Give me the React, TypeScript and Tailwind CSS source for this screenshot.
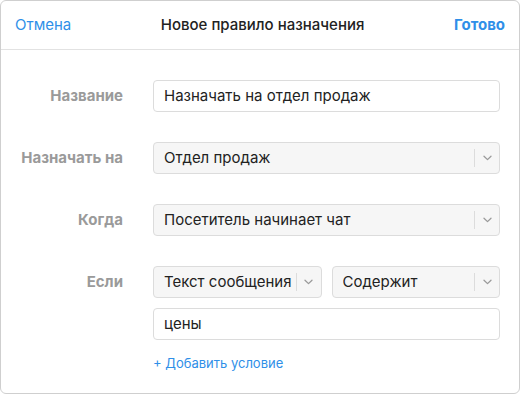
import React from "react";

const Chevron = () => (
  <svg width="9" height="6" viewBox="0 0 9 6" fill="none">
    <path d="M1 1.2 L4.5 4.6 L8 1.2" stroke="#9a9a9a" strokeWidth="1.3" strokeLinecap="round" strokeLinejoin="round" />
  </svg>
);

const Select = ({ value, className = "" }: { value: string; className?: string }) => (
  <div className={`flex h-[32px] items-center rounded-[4px] border border-[#dcdcdc] bg-[#f6f6f6] pl-[10px] ${className}`}>
    <span className="flex-1 truncate text-[15px] text-[#222]">{value}</span>
    <span className="h-[18px] w-px bg-[#dcdcdc]" />
    <span className="flex w-[24px] items-center justify-center">
      <Chevron />
    </span>
  </div>
);

const Input = ({ value }: { value: string }) => (
  <div className="flex h-[32px] items-center rounded-[4px] border border-[#dcdcdc] bg-white pl-[10px]">
    <span className="text-[15px] text-[#222]">{value}</span>
  </div>
);

const Label = ({ children }: { children: React.ReactNode }) => (
  <div className="flex h-[32px] w-[122px] shrink-0 items-center justify-end text-[15px] font-bold text-[#9a9a9a]">
    {children}
  </div>
);

export default function App() {
  return (
    <div
      className="h-[394px] w-[520px] bg-white"
      style={{ fontFamily: "Inter, 'Noto Sans', sans-serif" }}
    >
      <div className="flex h-full w-full flex-col rounded-[6px] border border-[#cfcfcf]">
        <div className="flex h-[49px] shrink-0 items-center justify-between border-b border-[#e2e2e2] px-[14px]">
          <span className="text-[15px] text-[#2f8fe8]">Отмена</span>
          <span className="text-[15px] font-medium text-[#222]">Новое правило назначения</span>
          <span className="text-[15px] font-bold text-[#2f8fe8]">Готово</span>
        </div>
        <div className="flex flex-col gap-[30px] pt-[30px] pr-[19px]">
          <div className="flex gap-[30px]">
            <Label>Название</Label>
            <div className="flex-1">
              <Input value="Назначать на отдел продаж" />
            </div>
          </div>
          <div className="flex gap-[30px]">
            <Label>Назначать на</Label>
            <div className="flex-1">
              <Select value="Отдел продаж" />
            </div>
          </div>
          <div className="flex gap-[30px]">
            <Label>Когда</Label>
            <div className="flex-1">
              <Select value="Посетитель начинает чат" />
            </div>
          </div>
          <div className="flex gap-[30px]">
            <Label>Если</Label>
            <div className="flex flex-1 flex-col gap-[10px]">
              <div className="flex gap-[10px]">
                <Select value="Текст сообщения" className="flex-1" />
                <Select value="Содержит" className="flex-1" />
              </div>
              <Input value="цены" />
              <div className="pt-[4px] text-[13px] text-[#2f8fe8]">+ Добавить условие</div>
            </div>
          </div>
        </div>
      </div>
    </div>
  );
}
